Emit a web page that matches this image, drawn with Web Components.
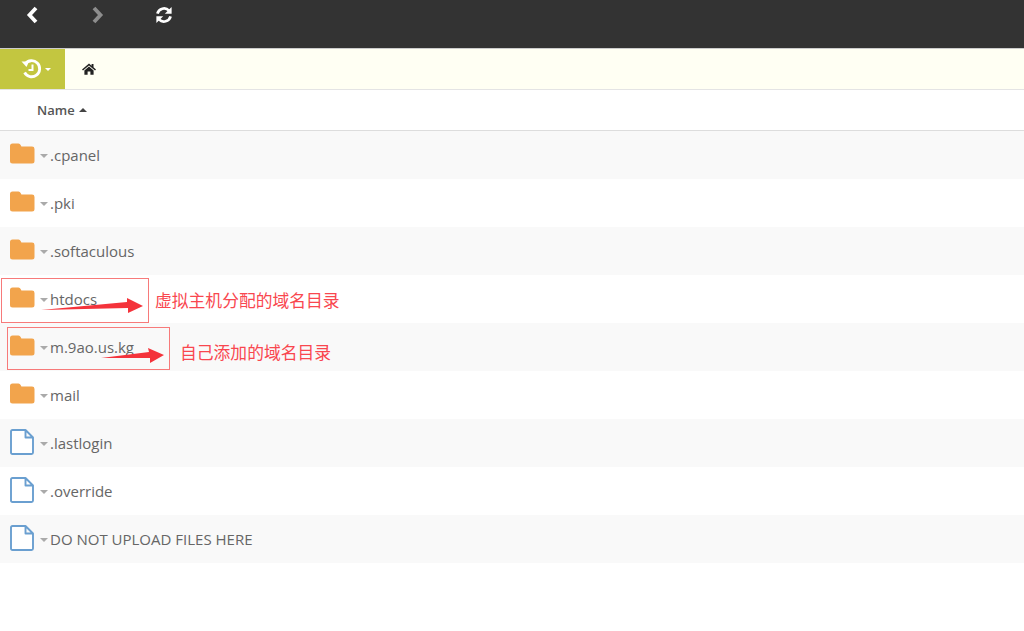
<!DOCTYPE html>
<html>
<head>
<meta charset="utf-8">
<style>
  html, body { margin: 0; padding: 0; background: #fff; }
  body { font-family: "Open Sans", "Noto Sans CJK SC", sans-serif; overflow: hidden; height: 631px; }
  fm-app { width: 1024px; height: 631px; }
</style>
</head>
<body>
<fm-app>
  <fm-toolbar></fm-toolbar>
  <fm-crumbs></fm-crumbs>
  <fm-header>Name</fm-header>
  <fm-row kind="folder">.cpanel</fm-row>
  <fm-row kind="folder">.pki</fm-row>
  <fm-row kind="folder">.softaculous</fm-row>
  <fm-row kind="folder">htdocs</fm-row>
  <fm-row kind="folder">m.9ao.us.kg</fm-row>
  <fm-row kind="folder">mail</fm-row>
  <fm-row kind="file">.lastlogin</fm-row>
  <fm-row kind="file">.override</fm-row>
  <fm-row kind="file">DO NOT UPLOAD FILES HERE</fm-row>
  <fm-note left="1" top="278" width="148" height="45" arrow="41,310 127,302 127,298 143,306 128,313 128,308" note-x="155" note-y="290">虚拟主机分配的域名目录</fm-note>
  <fm-note left="7" top="327" width="163" height="43" arrow="101,358 149,352 148,348 164,355 150,363 150,358" note-x="180" note-y="342">自己添加的域名目录</fm-note>
</fm-app>
<script>
class FmApp extends HTMLElement {
    constructor() {
        super();
        this.attachShadow({ mode: "open" });
        this.shadowRoot.innerHTML = `
      <style>
        :host { display: flex; flex-direction: column; position: relative; }
      </style>
      <slot></slot>
    `;
    }
}

class FmToolbar extends HTMLElement {
    constructor() {
        super();
        this.attachShadow({ mode: "open" });
        this.shadowRoot.innerHTML = `
      <style>
        :host { display: flex; flex: none; height: 49px; background: #333; border-bottom: 1px solid #ccc; box-sizing: border-box; padding-left: 26px; }
        svg { display: block; margin-top: 6px; }
        .fwd { margin-left: 52px; }
        .ref { margin-left: 51px; }
      </style>
      <svg width="13" height="18" viewBox="0 0 13 18"><path d="M10 2 L3.5 9 L10 16" fill="none" stroke="#fff" stroke-width="3.8"/></svg>
      <svg class="fwd" width="13" height="18" viewBox="0 0 13 18"><path d="M3 2 L9.5 9 L3 16" fill="none" stroke="#8d8d8d" stroke-width="3.8"/></svg>
      <svg class="ref" width="18" height="18" viewBox="0 0 18 18">
        <path d="M2.4 7.6 A6.9 6.9 0 0 1 14 4.6" fill="none" stroke="#fff" stroke-width="2.7"/>
        <path d="M16.6 1 V7.8 H9.8 Z" fill="#fff"/>
        <path d="M15.6 10.4 A6.9 6.9 0 0 1 4 13.4" fill="none" stroke="#fff" stroke-width="2.7"/>
        <path d="M1.4 17 V10.2 H8.2 Z" fill="#fff"/>
      </svg>
    `;
    }
}

class FmCrumbs extends HTMLElement {
    constructor() {
        super();
        this.attachShadow({ mode: "open" });
        this.shadowRoot.innerHTML = `
      <style>
        :host { display: flex; flex: none; height: 40px; background: #fffff3; border-bottom: 1px solid #e4e4e4; }
        .history { width: 65px; background: #c3c640; display: flex; align-items: center; padding-left: 21px; box-sizing: border-box; gap: 3px; }
        .home { margin-left: 17px; align-self: center; display: block; }
        .caret { width: 0; height: 0; border: 3px solid transparent; border-top-color: #fff; margin-top: 4px; }
      </style>
      <div class="history">
        <svg width="21" height="20" viewBox="0 0 21 20">
          <path d="M4.2 5 A8 8 0 1 1 3.6 13.5" fill="none" stroke="#fff" stroke-width="2.8"/>
          <path d="M0.5 2.5 H8 L5.5 8 Z" fill="#fff"/>
          <path d="M11.5 5.5 V11 H7.5" fill="none" stroke="#fff" stroke-width="2"/>
        </svg>
        <span class="caret"></span>
      </div>
      <svg class="home" width="14" height="12" viewBox="0 0 14 12">
        <path d="M7 0.5 L0 6.5 L1 7.6 L7 2.4 L13 7.6 L14 6.5 L11.5 4.3 V1 H9.6 V2.7 Z" fill="#222"/>
        <path d="M2.4 7.4 L7 3.5 L11.6 7.4 V11.8 H8.4 V8.6 H5.6 V11.8 H2.4 Z" fill="#222"/>
      </svg>
    `;
    }
}

class FmHeader extends HTMLElement {
    constructor() {
        super();
        this.attachShadow({ mode: "open" });
        this.shadowRoot.innerHTML = `
      <style>
        :host { display: flex; flex: none; align-items: center; gap: 4px; height: 40px; padding-left: 37px; border-bottom: 1px solid #ddd; font-size: 13px; font-weight: 600; color: #555; }
        .caret { width: 0; height: 0; border: 4px solid transparent; border-bottom-color: #444; border-top-width: 0; }
      </style>
      <slot></slot><span class="caret"></span>
    `;
    }
}

const FOLDER_ICON = `<svg width="25" height="21" viewBox="0 0 25 21"><path d="M2.5 0.5 H8.5 Q10 0.5 10.6 2 L11.4 3.6 H22 Q24.5 3.6 24.5 6 V18 Q24.5 20.5 22 20.5 H2.5 Q0 20.5 0 18 V3 Q0 0.5 2.5 0.5 Z" fill="#f2a44c"/></svg>`;
const FILE_ICON = `<svg width="25" height="26" viewBox="0 0 25 26"><path d="M2.5 1 H15.5 L23 8.5 V23.5 Q23 25 21.5 25 H2.5 Q1 25 1 23.5 V2.5 Q1 1 2.5 1 Z M15.5 1 V8.5 H23" fill="#fff" stroke="#6a9fd0" stroke-width="1.9" stroke-linejoin="round"/></svg>`;

class FmRow extends HTMLElement {
    constructor() {
        super();
        this.attachShadow({ mode: "open" });
    }

    connectedCallback() {
        const icon = this.getAttribute("kind") === "file" ? FILE_ICON : FOLDER_ICON;
        this.shadowRoot.innerHTML = `
      <style>
        :host { display: flex; flex: none; height: 48px; align-items: center; font-size: 15px; color: #666; }
        :host(:nth-of-type(odd)) { background: #f9f9f9; }
        .ico { width: 25px; margin-left: 10px; display: flex; justify-content: center; margin-top: -3px; }
        svg { display: block; }
        .caret { width: 0; height: 0; border: 4px solid transparent; border-top-color: #aaa; border-bottom-width: 0; margin-left: 5px; margin-right: 2px; margin-top: 2px; }
        .name { line-height: 20px; margin-top: -1px; }
      </style>
      <span class="ico">${icon}</span><span class="caret"></span><span class="name"><slot></slot></span>
    `;
    }
}

// red box and arrow drawn on top of the listing
class FmNote extends HTMLElement {
    constructor() {
        super();
        this.attachShadow({ mode: "open" });
    }

    connectedCallback() {
        const n = name => Number(this.getAttribute(name));
        this.shadowRoot.innerHTML = `
      <style>
        :host { display: block; position: absolute; left: 0; top: 0; }
        .box { position: absolute; left: ${n("left")}px; top: ${n("top")}px; width: ${n("width")}px; height: ${n("height")}px; box-sizing: border-box; border: 1px solid #f77a7a; }
        svg { position: absolute; left: 0; top: 0; overflow: visible; }
        .note { position: absolute; left: ${n("note-x")}px; top: ${n("note-y")}px; font: 16.8px/20px "Noto Sans CJK SC", sans-serif; color: #f9474f; white-space: nowrap; }
      </style>
      <div class="box"></div>
      <svg width="1" height="1"><polygon points="${this.getAttribute("arrow")}" fill="#f4333b"/></svg>
      <span class="note"><slot></slot></span>
    `;
    }
}

customElements.define("fm-app", FmApp);
customElements.define("fm-toolbar", FmToolbar);
customElements.define("fm-crumbs", FmCrumbs);
customElements.define("fm-header", FmHeader);
customElements.define("fm-row", FmRow);
customElements.define("fm-note", FmNote);
</script>
</body>
</html>
